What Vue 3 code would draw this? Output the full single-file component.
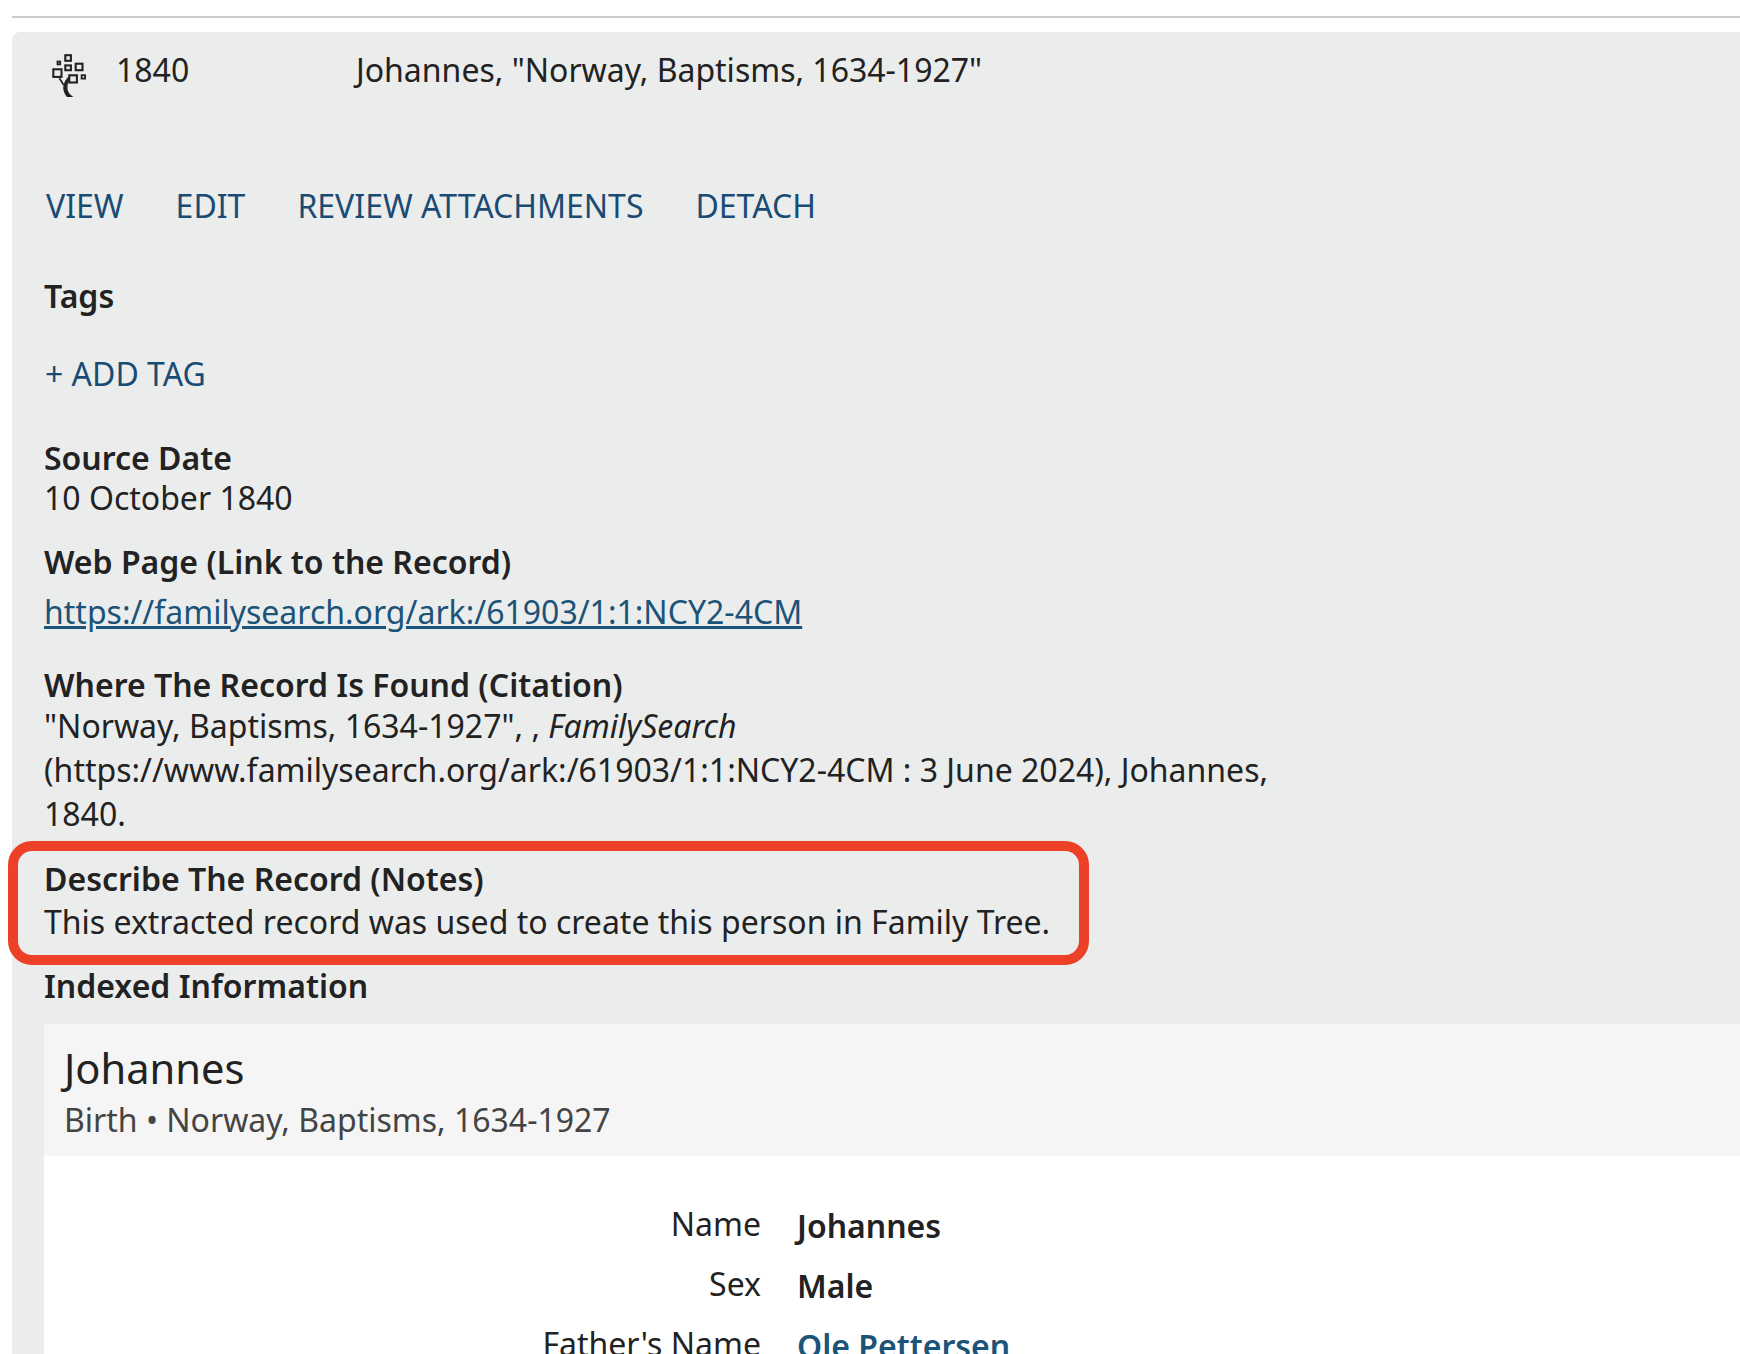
<template>
  <div class="page">
    <hr class="top-rule" />
    <div class="source-card">
      <div class="summary">
        <svg class="tree-icon" viewBox="0 0 34 44" fill="none" stroke="#222" stroke-width="2.100">
          <rect x="13.300" y="1.200" width="5.600" height="5.600" />
          <rect x="5.500" y="7.500" width="2.700" height="2.900" stroke-width="1.800" />
          <rect x="13.300" y="11.400" width="5.600" height="4.800" />
          <rect x="23.700" y="9.700" width="6.800" height="6.500" />
          <rect x="1.300" y="15.300" width="8.200" height="7.600" />
          <rect x="17.300" y="21.300" width="7.600" height="7.200" />
          <rect x="29.600" y="21.200" width="3.500" height="3.400" stroke-width="1.800" />
          <path d="M7.300 24.300c1.500 2 3 4 4.200 6.700" stroke-width="1.700" />
          <path d="M17 22c-4 4-6.500 9-5.500 14 .5 3 2.500 6 3.500 7h6.500c-3-2-6.500-5-6-10 0-3 .5-5 2-7z" fill="#222" stroke="none" />
        </svg>
        <span class="year">1840</span>
        <span class="title">Johannes, "Norway, Baptisms, 1634-1927"</span>
      </div>

      <div class="actions">
        <a v-for="action in actions" :key="action">{{ action }}</a>
      </div>

      <h4 class="tags-label">Tags</h4>
      <a class="add-tag">+ ADD TAG</a>

      <h4 class="source-date">Source Date</h4>
      <p>10 October 1840</p>

      <h4 class="web-page">Web Page (Link to the Record)</h4>
      <a class="record-link">https://familysearch.org/ark:/61903/1:1:NCY2-4CM</a>

      <h4 class="citation-label">Where The Record Is Found (Citation)</h4>
      <p class="citation">
        "Norway, Baptisms, 1634-1927", , <em>FamilySearch</em>
        (https://www.familysearch.org/ark:/61903/1:1:NCY2-4CM : 3 June 2024), Johannes, 1840.
      </p>

      <div class="notes">
        <h4>Describe The Record (Notes)</h4>
        <p>This extracted record was used to create this person in Family Tree.</p>
        <div class="highlight"></div>
      </div>

      <h4 class="indexed-label">Indexed Information</h4>
      <div class="record-panel">
        <div class="record-head">
          <div class="record-name">Johannes</div>
          <div class="record-sub">Birth • Norway, Baptisms, 1634-1927</div>
        </div>
        <div class="fields">
          <template v-for="field in fields" :key="field.label">
            <span class="field-label">{{ field.label }}</span>
            <span class="field-value" :class="{ linked: field.link }">{{ field.value }}</span>
          </template>
        </div>
      </div>
    </div>
  </div>
</template>

<script setup>
const actions = ['VIEW', 'EDIT', 'REVIEW ATTACHMENTS', 'DETACH']

const fields = [
  { label: 'Name', value: 'Johannes' },
  { label: 'Sex', value: 'Male' },
  { label: "Father's Name", value: 'Ole Pettersen', link: true }
]
</script>

<style>
html,
body {
  background: #fff;
  overflow: hidden;
}
</style>

<style scoped>
.page {
  width: 1740px;
  height: 1354px;
  overflow: hidden;
  font-family: "Noto Sans", sans-serif;
  font-size: 32px;
  line-height: 44px;
  color: #222;
  background: #fff;
}

.top-rule {
  height: 2px;
  margin: 16px 0 14px 12px;
  border: none;
  background: #c8cdcb;
}

.source-card {
  margin-left: 12px;
  padding: 16px 0 0 32px;
  height: 1322px;
  background: #ebeded;
  border-radius: 8px 0 0 0;
}

h4 {
  margin: 0;
  font-size: 32px;
  font-weight: 600;
}

p {
  margin: 0;
}

a {
  color: #1a4b73;
}

.summary {
  display: flex;
  align-items: flex-start;
  height: 84px;
}

.tree-icon {
  width: 34px;
  height: 44px;
  margin: 6px 0 0 8px;
}

.year {
  width: 240px;
  margin-left: 30px;
}

.actions {
  display: flex;
  gap: 52px;
  margin: 52px 0 0 2px;
}

.tags-label {
  margin-top: 46px;
}

.add-tag {
  display: block;
  margin: 34px 0 0 1px;
}

.source-date {
  margin-top: 44px;
  line-height: 36px;
}

.web-page {
  margin-top: 20px;
}

.record-link {
  display: block;
  margin-top: 6px;
  color: #1c5378;
  text-decoration: underline;
}

.citation-label {
  margin-top: 32px;
  line-height: 38px;
}

.citation {
  width: 1240px;
}

.notes {
  position: relative;
  margin-top: 22px;
}

.notes h4 {
  line-height: 42px;
}

.highlight {
  position: absolute;
  left: -36px;
  top: -17px;
  width: 1081px;
  height: 124px;
  box-sizing: border-box;
  border: 10px solid #ec4027;
  border-radius: 24px;
}

.indexed-label {
  margin-top: 20px;
}

.record-panel {
  margin-top: 16px;
  background: #fff;
  height: 400px;
}

.record-head {
  height: 132px;
  box-sizing: border-box;
  padding: 14px 20px 0;
  background: #f5f5f5;
}

.record-name {
  font-size: 41.600px;
  line-height: 60px;
}

.record-sub {
  color: #444;
}

.fields {
  display: grid;
  grid-template-columns: 717px 1fr;
  column-gap: 36px;
  row-gap: 14px;
  padding-top: 46px;
}

.field-label {
  text-align: right;
}

.field-value {
  margin-top: 2px;
  font-weight: 600;
}

.linked {
  color: #1c5378;
}
</style>
